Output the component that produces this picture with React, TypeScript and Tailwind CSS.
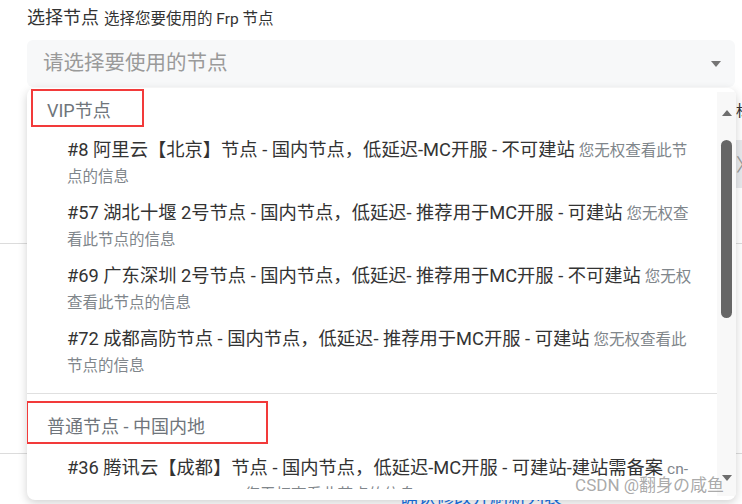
import React from "react";

const vipNodes = [
  { title: "#8 阿里云【北京】节点 - 国内节点，低延迟-MC开服 - 不可建站", note: "您无权查看此节点的信息" },
  { title: "#57 湖北十堰 2号节点 - 国内节点，低延迟- 推荐用于MC开服 - 可建站", note: "您无权查看此节点的信息" },
  { title: "#69 广东深圳 2号节点 - 国内节点，低延迟- 推荐用于MC开服 - 不可建站", note: "您无权查看此节点的信息" },
  { title: "#72 成都高防节点 - 国内节点，低延迟- 推荐用于MC开服 - 可建站", note: "您无权查看此节点的信息" },
];

function NodeItem({ title, note }: { title: string; note: string }) {
  return (
    <div className="pl-[40px] pr-[20px] py-[5px] leading-[26px]">
      <span className="text-[18.3px] text-[#333]">{title}</span>{" "}
      <span className="text-[15.5px] text-[#80868b]">{note}</span>
    </div>
  );
}

export default function App() {
  return (
    <div className="relative w-[742px] h-[504px] overflow-hidden bg-white font-['Roboto','Noto_Sans_CJK_SC',sans-serif]">
      {/* page behind the menu */}
      <div className="pl-[27px] pr-[7px] pt-[4px]">
        <div className="flex items-baseline gap-[5px] text-[#333]">
          <span className="text-[18px]">选择节点</span>
          <span className="text-[15.5px]">选择您要使用的 Frp 节点</span>
        </div>
        <div className="mt-[9px] h-[47px] rounded-[6px] bg-[#f7f8f9] flex items-center justify-between pl-[16px] pr-[14px]">
          <span className="text-[20.5px] text-[#9a9a9a]">请选择要使用的节点</span>
          <span className="w-0 h-0 border-l-[5px] border-r-[5px] border-t-[6px] border-l-transparent border-r-transparent border-t-[#757575]" />
        </div>
      </div>
      <div className="flex flex-col items-end">
        <div className="mt-[14px] h-[20px] w-[6px] flex items-center">
          <span className="w-[1px] h-[16px] bg-[#1a73e8]" />
          <span className="text-[15px] text-[#333] leading-none">标</span>
        </div>
        <div className="mt-[19px] h-[48px] w-[6px] bg-[#e8eaed] flex items-center text-[#999] text-[18px] overflow-hidden">〉</div>
      </div>
      <div className="mt-[55px] border-t border-[#dcdcdc]" />
      <div className="mt-[209px] border-t border-[#dcdcdc]" />
      <div className="mt-[34px] pl-[400px] text-[18px] text-[#1a73e8] leading-[20px]">确认修改并刷新列表</div>

      {/* open select menu */}
      <div className="absolute left-[27px] top-[88px] w-[709px] h-[412px] rounded-[8px] bg-white shadow-[0_3px_10px_rgba(0,0,0,0.18)] flex overflow-hidden">
        <div className="flex-1 h-[401px] overflow-hidden">
          <div className="relative h-[44px] pl-[20px] flex items-center text-[18px] text-[#6f757b]">
            VIP节点
            <div className="absolute left-[4px] top-[1px] w-[113px] h-[38px] border-2 border-[#f23a3a]" />
          </div>
          {vipNodes.map((n) => (
            <NodeItem key={n.title} title={n.title} note={n.note} />
          ))}
          <div className="mt-[9px] border-t border-[#e0e0e0]" />
          <div className="relative mt-[8px] h-[48px] pl-[20px] flex items-center text-[18px] text-[#6f757b]">
            普通节点 - 中国内地
            <div className="absolute left-[-1px] top-[-1px] w-[242px] h-[43px] border-2 border-[#f23a3a]" />
          </div>
          <NodeItem
            title="#36 腾讯云【成都】节点 - 国内节点，低延迟-MC开服 - 可建站-建站需备案"
            note="cn-sichuan-chengdu-tencent 您无权查看此节点的信息"
          />
        </div>
        <div className="w-[19px] mt-[4px] mb-[4px] bg-[#f8f8f8] flex flex-col items-center">
          <span className="mt-[18px] w-0 h-0 border-l-[5px] border-r-[5px] border-b-[6px] border-l-transparent border-r-transparent border-b-[#6e6e6e]" />
          <div className="mt-[24px] w-[11px] h-[178px] rounded-full bg-[#666]" />
          <div className="flex-1" />
          <span className="mb-[15px] w-0 h-0 border-l-[5px] border-r-[5px] border-t-[6px] border-l-transparent border-r-transparent border-t-[#6e6e6e]" />
        </div>
      </div>

      {/* watermark */}
      <div className="absolute right-[18px] top-[473px] text-[17px] text-[#a0a0a0]/90 leading-[24px]">CSDN @翻身の咸鱼</div>
    </div>
  );
}
